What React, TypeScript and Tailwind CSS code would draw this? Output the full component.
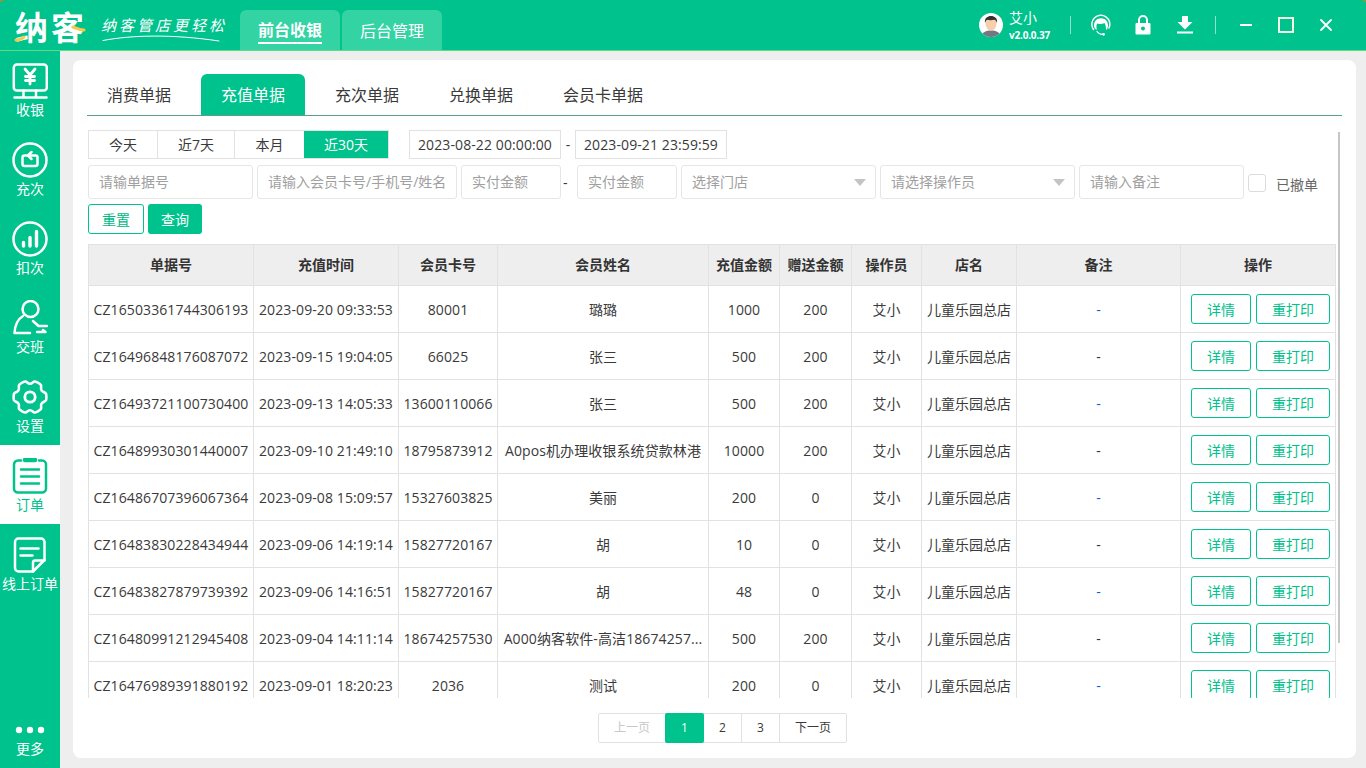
import React from "react";

const rows = [
  ["CZ16503361744306193", "2023-09-20 09:33:53", "80001", "璐璐", "1000", "200"],
  ["CZ16496848176087072", "2023-09-15 19:04:05", "66025", "张三", "500", "200"],
  ["CZ16493721100730400", "2023-09-13 14:05:33", "13600110066", "张三", "500", "200"],
  ["CZ16489930301440007", "2023-09-10 21:49:10", "18795873912", "A0pos机办理收银系统贷款林港", "10000", "200"],
  ["CZ16486707396067364", "2023-09-08 15:09:57", "15327603825", "美丽", "200", "0"],
  ["CZ16483830228434944", "2023-09-06 14:19:14", "15827720167", "胡", "10", "0"],
  ["CZ16483827879739392", "2023-09-06 14:16:51", "15827720167", "胡", "48", "0"],
  ["CZ16480991212945408", "2023-09-04 14:11:14", "18674257530", "A000纳客软件-高洁18674257...", "500", "200"],
  ["CZ16476989391880192", "2023-09-01 18:20:23", "2036", "测试", "200", "0"],
];

const headers = ["单据号", "充值时间", "会员卡号", "会员姓名", "充值金额", "赠送金额", "操作员", "店名", "备注", "操作"];
const widths = ["w-[166px]", "w-[145px]", "w-[99px]", "w-[211px]", "w-[71px]", "w-[72px]", "w-[70px]", "w-[95px]", "w-[164px]", "w-[155px]"];

const IconMonitor = () => (
  <svg width="36" height="36" viewBox="0 0 36 36" fill="none" stroke="currentColor" strokeWidth="2.5" strokeLinecap="round">
    <rect x="1.8" y="1.5" width="33" height="26" rx="3" />
    <path d="M11.5 27.5v7M24 27.5v7M2.500 34.500h32" />
    <path d="M13 6l5 6 5-6M18 12v9M13.500 13.500h9M13.500 17.500h9" strokeWidth="2.800" />
  </svg>
);
const IconRecharge = () => (
  <svg width="36" height="36" viewBox="0 0 36 36" fill="none" stroke="currentColor" strokeWidth="2.5" strokeLinecap="round" strokeLinejoin="round">
    <circle cx="18" cy="18" r="16.500" />
    <path d="M15 13.500h-2.500a2 2 0 0 0-2 2v6.500a2 2 0 0 0 2 2h11a2 2 0 0 0 2-2v-6.500a2 2 0 0 0-2-2h-5" />
    <path d="M19.500 10l-3.500 3.500 3.500 3.500" />
  </svg>
);
const IconBars = () => (
  <svg width="36" height="36" viewBox="0 0 36 36" fill="none" stroke="currentColor" strokeWidth="2.5" strokeLinecap="round">
    <circle cx="18" cy="18" r="16.500" />
    <path d="M11.500 21.500v3.500M18 16.500v8.500M24.500 10.500v14.500" strokeWidth="3.400" />
  </svg>
);
const IconShift = () => (
  <svg width="36" height="36" viewBox="0 0 36 36" fill="none" stroke="currentColor" strokeWidth="2.5" strokeLinecap="round" strokeLinejoin="round">
    <circle cx="18.500" cy="9" r="8" />
    <path d="M11 16c-5 3-8 9-8.500 17h15.500" />
    <path d="M21 21l5.500 5h8.500M25 32h8.500l-2.500-2" />
  </svg>
);
const IconGear = () => (
  <svg width="36" height="36" viewBox="0 0 36 36" fill="none" stroke="currentColor" strokeWidth="2.600" strokeLinejoin="round">
    <path d="M13.500 2.500c1.600 0 2 2.200 4.500 2.200s2.900-2.200 4.500-2.200c1.400 0 5.400 2 6.400 3.500 .9 1.500-.6 3.300.6 5.400 1.200 2 3.800 1.800 4.500 3.300 .5 1.300.5 5.300 0 6.600-.7 1.500-3.300 1.300-4.500 3.300-1.200 2.100.3 3.900-.6 5.400-1 1.500-5 3.500-6.400 3.500-1.600 0-2-2.200-4.500-2.200s-2.900 2.200-4.500 2.200c-1.400 0-5.400-2-6.400-3.500-.9-1.500.6-3.300-.6-5.400-1.200-2-3.800-1.800-4.500-3.300-.5-1.300-.5-5.300 0-6.600.7-1.500 3.300-1.300 4.500-3.300 1.200-2.100-.3-3.900.6-5.400 1-1.500 5-3.500 6.400-3.500z" />
    <circle cx="18" cy="18" r="5.200" strokeWidth="2.800" />
  </svg>
);
const IconOrder = () => (
  <svg width="36" height="36" viewBox="0 0 36 36" fill="none" stroke="currentColor" strokeWidth="2.500" strokeLinecap="round">
    <path d="M9 2.500H6a4 4 0 0 0-4 4v24a4 4 0 0 0 4 4h24a4 4 0 0 0 4-4v-24a4 4 0 0 0-4-4h-3" />
    <path d="M13 2h10" strokeWidth="4.500" />
    <path d="M9 11.500h18M9 18.500h18M9 25.500h18" />
  </svg>
);
const IconOnline = () => (
  <svg width="36" height="36" viewBox="0 0 36 36" fill="none" stroke="currentColor" strokeWidth="2.500" strokeLinecap="round" strokeLinejoin="round">
    <path d="M21 34.500H6.500a3.500 3.500 0 0 1-3.500-3.500V5a3.500 3.500 0 0 1 3.500-3.500H29a3.500 3.500 0 0 1 3.500 3.500v18z" />
    <path d="M21 34.500v-9a2 2 0 0 1 2-2h9.500" />
    <path d="M8.500 11.500h18M8.500 18.500h12" />
  </svg>
);
const IconDots = () => (
  <svg width="30" height="8" viewBox="0 0 30 8" fill="currentColor">
    <circle cx="4" cy="4" r="3.200" />
    <circle cx="15" cy="4" r="3.200" />
    <circle cx="26" cy="4" r="3.200" />
  </svg>
);

const nav: [string, React.ReactNode][] = [
  ["收银", <IconMonitor />],
  ["充次", <IconRecharge />],
  ["扣次", <IconBars />],
  ["交班", <IconShift />],
  ["设置", <IconGear />],
  ["订单", <IconOrder />],
  ["线上订单", <IconOnline />],
];

function Caret() {
  return <span className="w-0 h-0 border-x-[6px] border-x-transparent border-t-[7px] border-t-[#c4c4c4]" />;
}

function TextInput({ w, placeholder }: { w: string; placeholder: string }) {
  return (
    <input
      readOnly
      placeholder={placeholder}
      className={`${w} h-[34px] shrink-0 rounded-[3px] border border-[#e6e6e6] pl-[10px] pr-[4px] pb-[2px] text-[14px] text-[#333] outline-none placeholder:text-[#a0a0a0]`}
    />
  );
}

function SelectBox({ w, label }: { w: string; label: string }) {
  return (
    <div className={`${w} h-[34px] shrink-0 rounded-[3px] border border-[#e6e6e6] pl-[10px] pr-[9px] flex items-center justify-between text-[14px] text-[#a0a0a0]`}>
      <span className="-mt-[2px]">{label}</span>
      <Caret />
    </div>
  );
}

export default function App() {
  return (
    <div className="relative h-screen w-full overflow-hidden flex flex-col bg-[#eeeeee] text-[#3a3a3a] text-[14px] font-['Open_Sans','Noto_Sans_CJK_SC',sans-serif]">
      {/* top bar */}
      <header className="relative z-10 h-[51px] shrink-0 bg-[#00c28c] border-b border-[#5cdc84] flex items-end text-white">
        <span className="absolute left-0 top-0 w-[3px] h-[2px] bg-[#8a9a3a]" />
        <span className="absolute right-0 top-0 w-[3px] h-[2px] bg-[#8a9a3a]" />
        <div className="relative w-[240px] h-[50px] shrink-0 flex items-center">
          <span className="ml-[15px] mt-[5px] w-[74px] text-[33px] leading-[45px] font-bold tracking-[3px] text-white whitespace-nowrap">纳客</span>
          <svg className="absolute left-[13px] top-[24px]" width="76" height="20" viewBox="0 0 76 20" fill="none" stroke="#f7c948" strokeWidth="3" strokeLinecap="round">
            <path d="M3 16c3 0 6-1 8-3M60 3c3 1 6 3 11 3" />
          </svg>
          <div className="ml-[12px] -mt-[1px] flex flex-col">
            <span className="text-[15px] leading-[20px] italic tracking-[3px] whitespace-nowrap">纳客管店更轻松</span>
          </div>
          <svg className="absolute left-[102px] top-[34px]" width="118" height="8" viewBox="0 0 118 8" fill="none" stroke="#ffffff" strokeWidth="1" strokeLinecap="round">
            <path d="M1 6.500C30 1 70 0 117 7" />
          </svg>
        </div>
        <div className="flex gap-[2px] h-[40px] mb-0">
          <div className="w-[100px] pt-[1px] rounded-t-[6px] bg-[#33d3a4] flex items-center justify-center">
            <span className="text-[16px] leading-[24px] font-bold border-b-2 border-white">前台收银</span>
          </div>
          <div className="w-[100px] pt-[1px] rounded-t-[6px] bg-[#33d3a4] flex items-center justify-center text-[16px]">后台管理</div>
        </div>
        <div className="ml-auto h-[50px] flex items-center">
          <svg width="24" height="24" viewBox="0 0 24 24">
            <circle cx="12" cy="12" r="12" fill="#fff" />
            <clipPath id="av"><circle cx="12" cy="12" r="12" /></clipPath>
            <g clipPath="url(#av)">
              <path d="M2 24c1-5 5-6.500 10-6.500s9 1.500 10 6.500z" fill="#73777f" />
              <ellipse cx="12" cy="11" rx="5.500" ry="6.500" fill="#f7cdaa" />
              <path d="M6 10c-.8-5 2.500-7 6-7s6.800 2 6 7c-.6-2-1.500-3-3-3.300-2 .6-5 .6-6.500 0C7.500 7 6.600 8 6 10z" fill="#33302f" />
            </g>
          </svg>
          <div className="ml-[6px] w-[61px] flex flex-col">
            <span className="text-[14px] leading-[18px] h-[19px]">艾小</span>
            <span className="text-[10px] leading-[14px] font-bold tracking-[-0.2px] whitespace-nowrap">v2.0.0.37</span>
          </div>
          <div className="w-px h-[18px] bg-[#8fe3c9]" />
          <svg className="ml-[20px]" width="20" height="22" viewBox="0 0 20 22" fill="none">
            <path d="M2.500 15.500A9 9 0 1 1 18 14" stroke="#fff" strokeWidth="1.500" strokeLinecap="round" />
            <path d="M3 11.500C3 7 6 4.200 10 4.200S17 7 17 11.500c0 2-.7 3.500-1.800 4.700-.4-2 0-5-1.800-7.200-2 1.400-5 1.400-7 .4C5 10.500 5.500 13.500 5.800 16 4 15.300 3 13.500 3 11.500z" fill="#fff" />
            <path d="M6 17.500c1.500 2.300 3.800 3 6 2.800" stroke="#fff" strokeWidth="1.300" strokeLinecap="round" />
            <circle cx="12.500" cy="20.300" r="1.400" fill="#fff" />
          </svg>
          <svg className="ml-[24px]" width="16" height="20" viewBox="0 0 16 20">
            <path d="M4 8V5a4 4 0 0 1 8 0v3" fill="none" stroke="#fff" strokeWidth="2" />
            <path d="M1.500 8h13a1 1 0 0 1 1 1v9.500a1 1 0 0 1-1 1h-13a1 1 0 0 1-1-1V9a1 1 0 0 1 1-1z" fill="#fff" />
            <circle cx="8" cy="13.500" r="2" fill="#00c28c" />
          </svg>
          <svg className="ml-[26px]" width="16" height="18" viewBox="0 0 16 18" fill="#fff">
            <path d="M5 0h6v6h4.500L8 13.500.5 6H5z" />
            <rect x="0" y="15.500" width="16" height="2" />
          </svg>
          <div className="ml-[22px] w-px h-[18px] bg-[#8fe3c9]" />
          <span className="ml-[24px] w-[12px] h-[2px] bg-[#fff]" />
          <span className="ml-[26px] w-[16px] h-[16px] border-2 border-[#f4f8e4]" />
          <svg className="ml-[26px] mr-[34px]" width="12" height="12" viewBox="0 0 12 12" stroke="#fff" strokeWidth="1.800" strokeLinecap="round">
            <path d="M1 1l10 10M11 1L1 11" />
          </svg>
        </div>
      </header>

      <div className="flex-1 flex min-h-0">
        {/* sidebar */}
        <aside className="-mt-px w-[60px] shrink-0 bg-[#00c28c] text-white flex flex-col">
          {nav.map(([label, icon], i) => (
            <div
              key={label}
              className={`h-[79px] shrink-0 flex flex-col items-center pt-[13px] ${i === 5 ? "bg-white text-[#00c28c]" : ""}`}
            >
              {icon}
              <span className="mt-[1px] text-[14px] leading-[20px] whitespace-nowrap">{label}</span>
            </div>
          ))}
          <div className="mt-auto pb-[9px] flex flex-col items-center">
            <IconDots />
            <span className="mt-[5px] text-[14px] leading-[20px]">更多</span>
          </div>
        </aside>

        {/* main */}
        <main className="flex-1 min-w-0 pl-[13px] pr-[10px] pt-[9px] pb-[10px]">
          <div className="relative h-full bg-white rounded-[8px] pl-[14px] pt-[14px]">
            {/* tabs */}
            <div className="w-[1255px] h-[42px] border-b border-[#5f9c8e] flex gap-[10px] text-[16px]">
              <div className="w-[104px] h-[41px] flex items-center justify-center">消费单据</div>
              <div className="w-[104px] h-[41px] rounded-t-[6px] bg-[#00c28c] text-white flex items-center justify-center">充值单据</div>
              <div className="w-[104px] h-[41px] flex items-center justify-center">充次单据</div>
              <div className="w-[104px] h-[41px] flex items-center justify-center">兑换单据</div>
              <div className="w-[120px] h-[41px] flex items-center justify-center">会员卡单据</div>
            </div>

            {/* scrollbar */}
            <div className="absolute left-[1265px] top-[72px] w-[2px] h-[511px] bg-[#c6c6c6]" />

            <div className="ml-px mt-[14px]">
              {/* date row */}
              <div className="flex items-center h-[29px]">
                <div className="flex h-[29px] border border-[#e2e2e2]">
                  <div className="w-[69px] border-r border-[#e2e2e2] flex items-center justify-center">今天</div>
                  <div className="w-[77px] border-r border-[#e2e2e2] flex items-center justify-center">近7天</div>
                  <div className="w-[69px] flex items-center justify-center">本月</div>
                  <div className="w-[84px] bg-[#00c28c] text-white flex items-center justify-center">近30天</div>
                </div>
                <div className="ml-[20px] w-[152px] h-[29px] border border-[#e2e2e2] flex items-center justify-center whitespace-nowrap tracking-[0.1px]">2023-08-22 00:00:00</div>
                <span className="w-[14px] text-center">-</span>
                <div className="w-[152px] h-[29px] border border-[#e2e2e2] flex items-center justify-center whitespace-nowrap tracking-[0.1px]">2023-09-21 23:59:59</div>
              </div>

              {/* filter row */}
              <div className="mt-[6px] flex items-center gap-[4px]">
                <TextInput w="w-[165px]" placeholder="请输单据号" />
                <TextInput w="w-[200px]" placeholder="请输入会员卡号/手机号/姓名" />
                <TextInput w="w-[100px]" placeholder="实付金额" />
                <span className="w-[8px] text-left -translate-x-[2px]">-</span>
                <TextInput w="w-[100px]" placeholder="实付金额" />
                <SelectBox w="w-[195px]" label="选择门店" />
                <SelectBox w="w-[195px]" label="请选择操作员" />
                <TextInput w="w-[165px]" placeholder="请输入备注" />
                <div className="flex items-center mt-[2px]">
                  <span className="w-[18px] h-[18px] rounded-[3px] border border-[#dcdcdc]" />
                  <span className="ml-[10px] mt-[2px] text-[#666]">已撤单</span>
                </div>
              </div>

              {/* actions */}
              <div className="mt-[5px] flex gap-[4px] h-[30px]">
                <div className="w-[56px] rounded-[3px] border border-[#00c28c] text-[#00b985] flex items-center justify-center">重置</div>
                <div className="w-[54px] rounded-[3px] bg-[#00c28c] text-white flex items-center justify-center">查询</div>
              </div>

              {/* table */}
              <div className="mt-[10px] w-[1248px] h-[454px] overflow-hidden">
                <table className="table-fixed w-[1248px] border-separate border-spacing-0">
                  <colgroup>
                    {widths.map((w, i) => <col key={i} className={w} />)}
                  </colgroup>
                  <thead>
                    <tr>
                      {headers.map((h, i) => (
                        <th
                          key={h}
                          className={`h-[42px] p-0 pb-[2px] bg-[#eeeeee] border-t border-b border-r border-[#e2e2e2] text-center font-bold text-[14px] text-[#333] whitespace-nowrap ${i === 0 ? "border-l" : ""}`}
                        >
                          {h}
                        </th>
                      ))}
                    </tr>
                  </thead>
                  <tbody>
                    {rows.map((r, idx) => (
                      <tr key={r[0]}>
                        {r.map((c, i) => (
                          <td
                            key={i}
                            className={`h-[47px] p-0 border-b border-r border-[#e2e2e2] text-center whitespace-nowrap tracking-[0.1px] ${i === 0 ? "border-l" : ""}`}
                          >
                            {c}
                          </td>
                        ))}
                        <td className="p-0 border-b border-r border-[#e2e2e2] text-center">艾小</td>
                        <td className="p-0 border-b border-r border-[#e2e2e2] text-center whitespace-nowrap">儿童乐园总店</td>
                        <td className={`p-0 border-b border-r border-[#e2e2e2] text-center ${idx % 2 === 0 ? "text-[#0066dd]" : "text-[#333]"}`}>-</td>
                        <td className="p-0 pl-[10px] border-b border-r border-[#e2e2e2]">
                          <div className="flex gap-[5px]">
                            <div className="w-[60px] h-[30px] rounded-[3px] border border-[#00c28c] text-[#00c28c] flex items-center justify-center">详情</div>
                            <div className="w-[74px] h-[30px] rounded-[3px] border border-[#00c28c] text-[#00c28c] flex items-center justify-center">重打印</div>
                          </div>
                        </td>
                      </tr>
                    ))}
                  </tbody>
                </table>
              </div>

              {/* pagination */}
              <div className="mt-[15px] ml-[510px] w-[249px] h-[30px] flex rounded-[2px] border border-[#e2e2e2] text-[12px]">
                <div className="w-[66px] text-[#c8c8c8] flex items-center justify-center">上一页</div>
                <div className="w-[39px] -my-px rounded-[2px] bg-[#00c28c] text-white flex items-center justify-center">1</div>
                <div className="w-[38px] border-r border-[#e2e2e2] flex items-center justify-center">2</div>
                <div className="w-[38px] border-r border-[#e2e2e2] flex items-center justify-center">3</div>
                <div className="flex-1 flex items-center justify-center">下一页</div>
              </div>
            </div>
          </div>
        </main>
      </div>
    </div>
  );
}
